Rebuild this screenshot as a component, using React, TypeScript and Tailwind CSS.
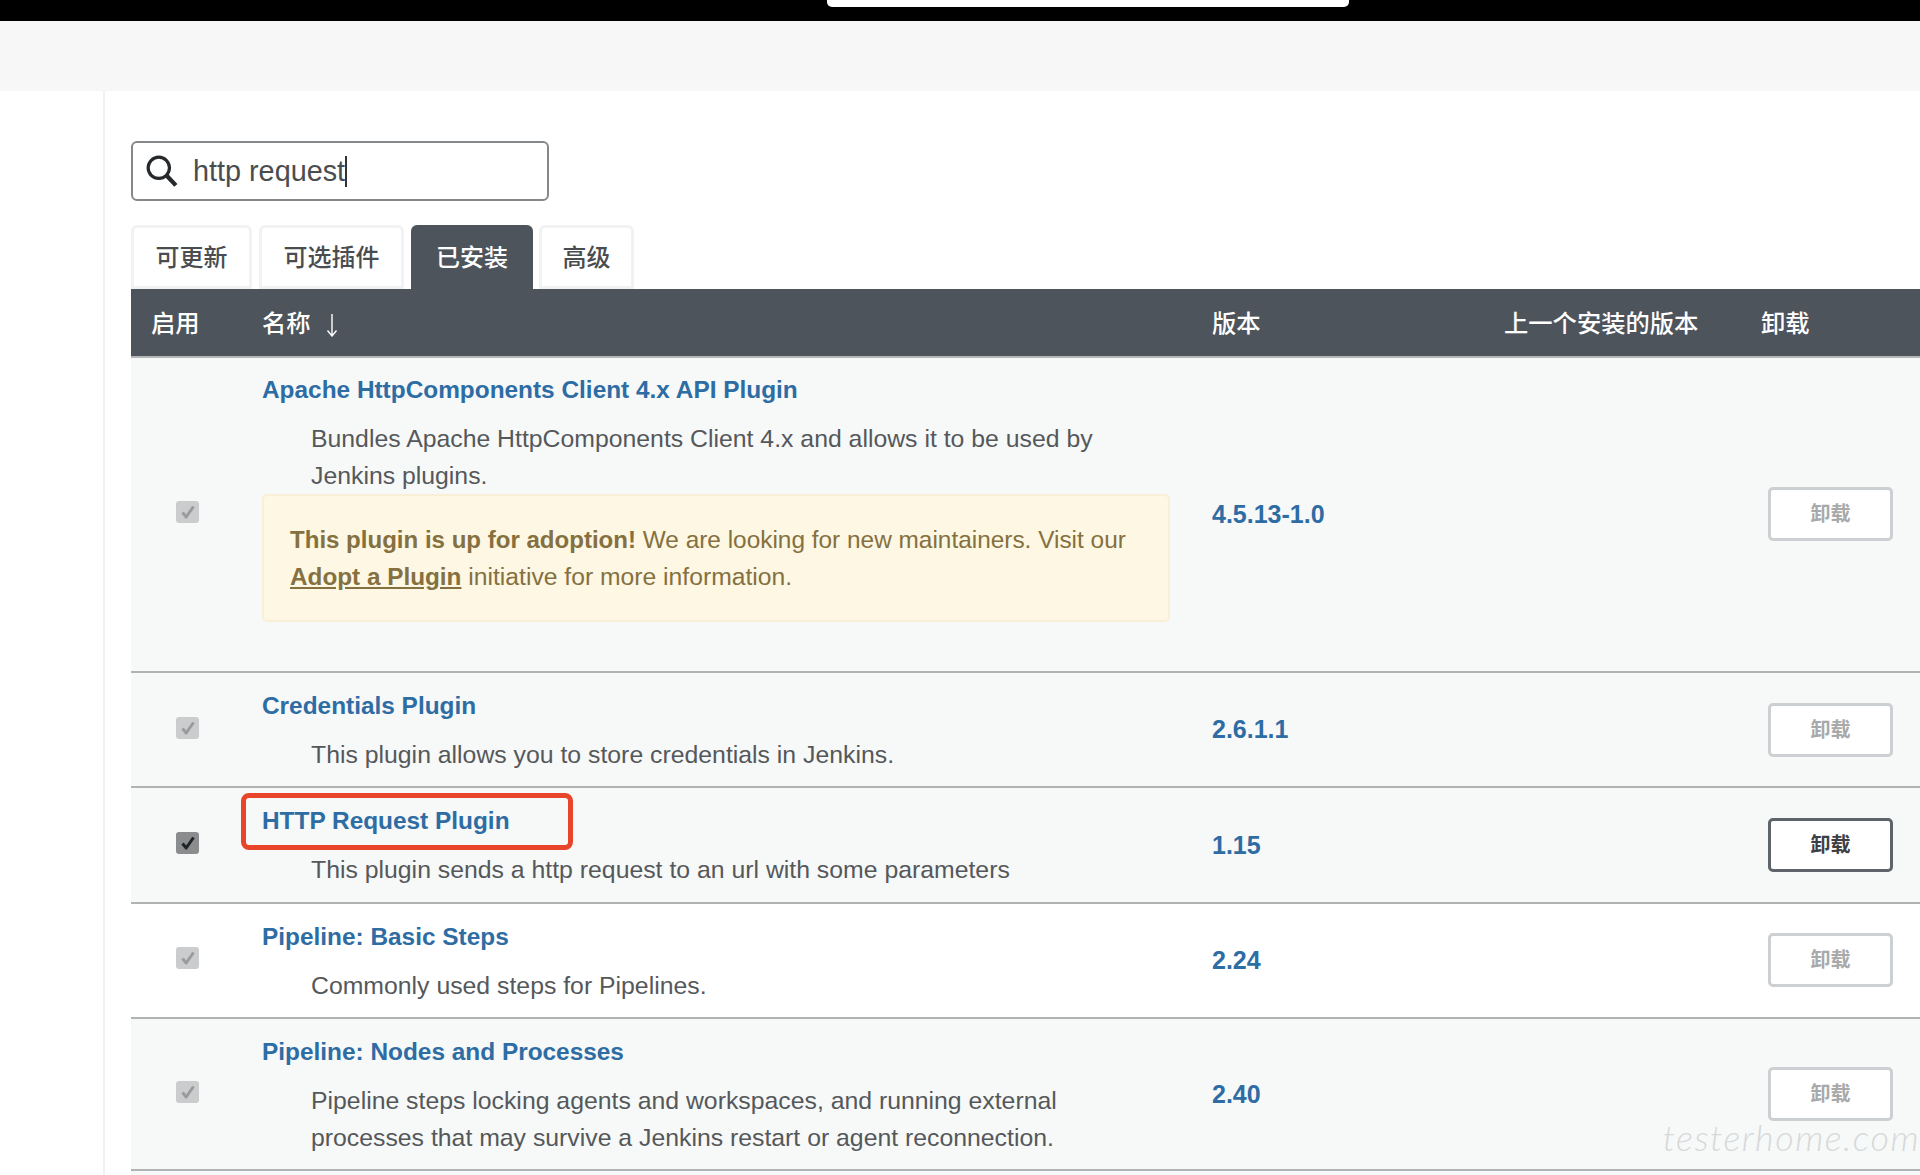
const FONT = "font-['Liberation_Sans','Noto_Sans_CJK_SC',sans-serif]";

type Plugin = {
  name: string;
  desc: string[];
  version: string;
  active?: boolean;
  white?: boolean;
  adoption?: boolean;
  highlight?: boolean;
};

const PLUGINS: Plugin[] = [
  {
    name: 'Apache HttpComponents Client 4.x API Plugin',
    desc: ['Bundles Apache HttpComponents Client 4.x and allows it to be used by', 'Jenkins plugins.'],
    version: '4.5.13-1.0',
    adoption: true,
  },
  {
    name: 'Credentials Plugin',
    desc: ['This plugin allows you to store credentials in Jenkins.'],
    version: '2.6.1.1',
  },
  {
    name: 'HTTP Request Plugin',
    desc: ['This plugin sends a http request to an url with some parameters'],
    version: '1.15',
    active: true,
    highlight: true,
  },
  {
    name: 'Pipeline: Basic Steps',
    desc: ['Commonly used steps for Pipelines.'],
    version: '2.24',
    white: true,
  },
  {
    name: 'Pipeline: Nodes and Processes',
    desc: [
      'Pipeline steps locking agents and workspaces, and running external',
      'processes that may survive a Jenkins restart or agent reconnection.',
    ],
    version: '2.40',
  },
];

function Checkbox({ active }: { active?: boolean }) {
  return (
    <div
      className={`flex h-[22px] w-[23px] items-center justify-center rounded-[3px] mb-1 ${
        active ? 'bg-[#8b8c8d]' : 'bg-[#cbcccd]'
      }`}
    >
      <svg width="18" height="18" viewBox="0 0 18 18" fill="none">
        <path
          d="M3.5 9.5 L7.2 14 L14.5 3.5"
          stroke={active ? '#1f2326' : '#9a9b9c'}
          strokeWidth="3"
          strokeLinejoin="round"
        />
      </svg>
    </div>
  );
}

function PluginRow({ plugin }: { plugin: Plugin }) {
  return (
    <div
      className={`grid grid-cols-[111px_950px_292px_257px_1fr] items-center border-b-2 border-[#b0b2b4] ${
        plugin.white ? 'bg-white' : 'bg-[#f7f8f8]'
      }`}
    >
      <div className="pl-[45px]">
        <Checkbox active={plugin.active} />
      </div>
      <div
        className={`relative px-5 ${plugin.adoption ? 'pt-[14px] pb-[48.5px]' : 'pt-[15px] pb-[12.6px]'}`}
      >
        {plugin.highlight && (
          <div className="absolute left-[-1px] top-[5px] h-[57px] w-[332px] rounded-[8px] border-[5px] border-[#e8452a]" />
        )}
        <div className="text-[24.4px] font-bold leading-[36px] text-[#2e6ca4]">{plugin.name}</div>
        <div className="mt-[13px] pl-[49px] text-[24.8px] leading-[36.7px] text-[#55585b]">
          {plugin.desc.map((line) => (
            <div key={line}>{line}</div>
          ))}
        </div>
        {plugin.adoption && (
          <div className="h-[128px] w-[908px] rounded-[5px] border-2 border-[#f9efd6] bg-[#fdf7e3] px-[26px] py-[26px] text-[24.4px] leading-[36.7px] text-[#85703f]">
            <div>
              <strong className="text-[24.05px]">This plugin is up for adoption!</strong> We are looking for new
              maintainers. Visit our
            </div>
            <div className="text-[24.7px]">
              <a className="text-[24.3px] font-bold underline">Adopt a Plugin</a> initiative for more information.
            </div>
          </div>
        )}
      </div>
      <div className="mt-[1px] px-5 text-[25px] font-bold text-[#2e6ca4]">{plugin.version}</div>
      <div />
      <div className="pl-[27px]">
        <div
          className={`flex h-[54px] w-[125px] items-center justify-center rounded-[5px] border-[3px] bg-white text-[20px] font-bold ${
            plugin.active ? 'border-[#5e646a] text-[#3c4045]' : 'border-[#ccd0d2] text-[#a7a9ab]'
          }`}
        >
          卸载
        </div>
      </div>
    </div>
  );
}

export default function App() {
  return (
    <div className={`relative h-[1175px] overflow-hidden bg-white ${FONT}`}>
      <div className="flex h-[21px] bg-black">
        <div className="ml-[827px] h-[7px] w-[522px] rounded-b-[5px] bg-white" />
      </div>
      <div className="h-[70px] bg-[#f7f7f7]" />

      <div className="ml-[103px] min-h-[1084px] border-l-2 border-[#f0f1f1] pl-[26px] pt-[50px]">
        <div className="flex h-[60px] w-[418px] items-center rounded-[6px] border-2 border-[#85888b] pl-[13px]">
          <svg width="32" height="32" viewBox="0 0 30 30" fill="none">
            <circle cx="12" cy="12" r="10" stroke="#26292c" strokeWidth="3" />
            <path d="M19.5 19.5 L28 28.5" stroke="#26292c" strokeWidth="4" />
          </svg>
          <span className="ml-[15px] pt-[1px] text-[28.8px] text-[#4a4d50]">http request</span>
          <span className="h-[31px] w-[2px] bg-[#333]" />
        </div>

        <div className="mt-[24px] flex items-end text-[24px] font-medium">
          <div className="flex h-[64px] w-[121px] items-center justify-center rounded-t-[6px] border-[3px] border-[#f0f2f3] bg-white pt-[2px] text-[#4a4d50]">
            可更新
          </div>
          <div className="ml-[7px] flex h-[64px] w-[145px] items-center justify-center rounded-t-[6px] border-[3px] border-[#f0f2f3] bg-white pt-[2px] text-[#4a4d50]">
            可选插件
          </div>
          <div className="ml-[7px] flex h-[64px] w-[122px] items-center justify-center rounded-t-[6px] bg-[#4e545b] pt-[2px] text-white">
            已安装
          </div>
          <div className="ml-[6px] flex h-[64px] w-[95px] items-center justify-center rounded-t-[6px] border-[3px] border-[#f0f2f3] bg-white pt-[2px] text-[#4a4d50]">
            高级
          </div>
        </div>

        <div className="grid h-[69px] grid-cols-[111px_950px_292px_257px_1fr] items-center border-b-2 border-[#b4b7b9] bg-[#4e545b] pt-[4px] text-[24.3px] font-medium text-white">
          <div className="pl-5">启用</div>
          <div className="flex items-center px-5">
            名称
            <svg className="ml-[15px]" width="12" height="24" viewBox="0 0 12 24" fill="none" stroke="#fff">
              <path d="M6 1 V23 M1.5 17.5 L6 23 L10.5 17.5" strokeWidth="1.4" />
            </svg>
          </div>
          <div className="px-5">版本</div>
          <div className="px-5">上一个安装的版本</div>
          <div className="px-5">卸载</div>
        </div>

        {PLUGINS.map((plugin) => (
          <PluginRow key={plugin.name} plugin={plugin} />
        ))}
        <div className="h-3 bg-[#f7f8f8]" />
      </div>

      <div className="absolute right-0 top-[1110px] font-['Lato',sans-serif] text-[36px] font-light italic tracking-[1.5px] text-[#d6d8da]">
        testerhome.com
      </div>
    </div>
  );
}
